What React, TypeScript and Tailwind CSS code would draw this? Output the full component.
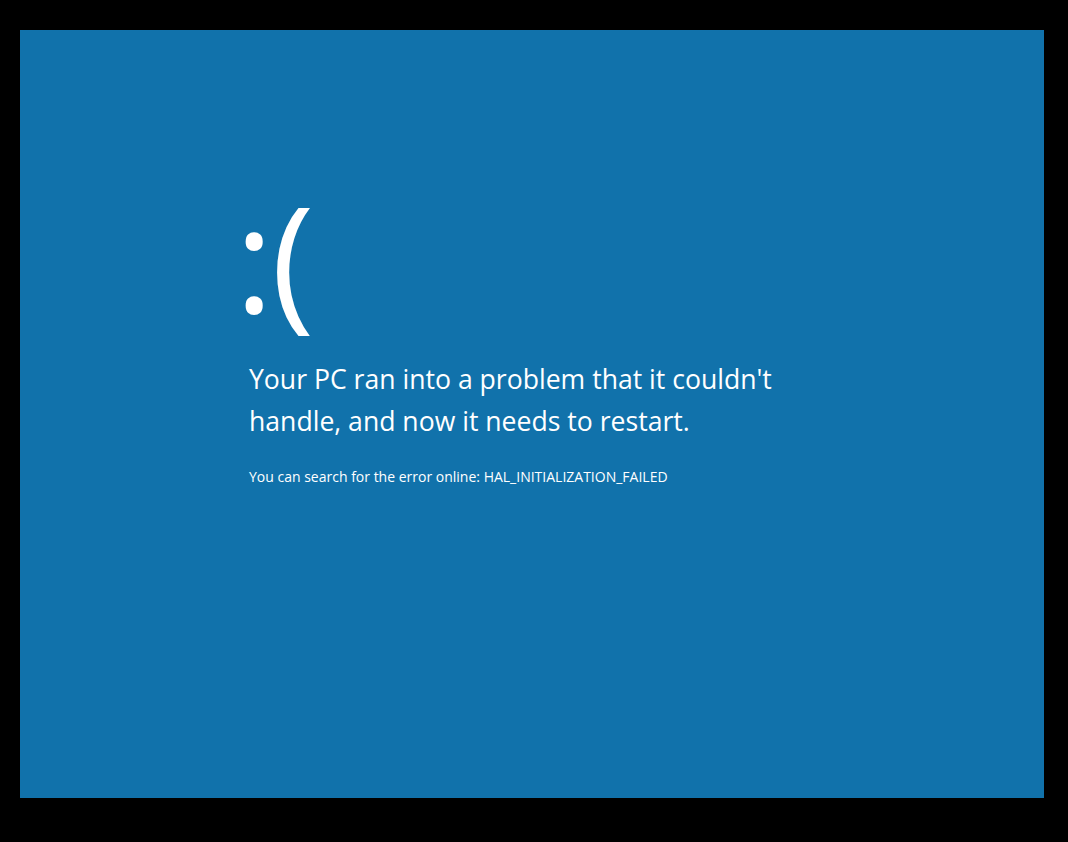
import React from "react";

export default function App() {
  return (
    <div className="min-h-screen w-full bg-black pl-[20px] pt-[30px]">
      <div className="h-[768px] w-[1024px] bg-[#1172ab] pl-[229px] pt-[142px] text-white font-['Open_Sans',sans-serif]">
        <div className="flex h-[170px] items-center text-[146px] font-normal leading-none">
          <span className="-ml-[14px]">:</span>
          <span className="-ml-[2px]">(</span>
        </div>
        <p className="mt-[16px] w-[580px] text-[26.6px] leading-[42px]">
          Your PC ran into a problem that it couldn't handle, and now it needs to restart.
        </p>
        <p className="mt-[26px] text-[14px] leading-[18px]">
          You can search for the error online: HAL_INITIALIZATION_FAILED
        </p>
      </div>
    </div>
  );
}
